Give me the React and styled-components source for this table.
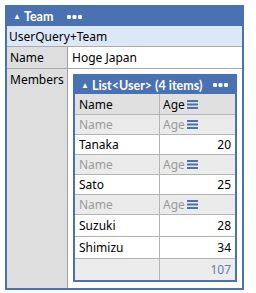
import styled, { createGlobalStyle } from "styled-components";

const blue = "#4a71b1";

const GlobalStyle = createGlobalStyle`
  body {
    margin: 5px;
    background: #ffffff;
    font-family: "Noto Sans", "Open Sans", sans-serif;
    font-size: 12px;
    color: #000;
  }
`;

const Panel = styled.div`
  width: 239px;
  box-sizing: border-box;
  border: 2px solid ${blue};
  background: #fff;
`;

const Caption = styled.div`
  height: ${(p) => p.$h || 19}px;
  background: ${blue};
  color: #fff;
  font-family: Lato, "Noto Sans", sans-serif;
  font-size: 12.5px;
  font-weight: bold;
  display: flex;
  align-items: center;
  padding-left: 6px;
  gap: 3px;
  white-space: nowrap;
`;

const Arrow = styled.span`
  font-size: 8px;
  margin-top: -1px;
`;

const DotsBox = styled.span`
  display: flex;
  margin-left: ${(p) => p.$gap || 12}px;
`;

const Dots = ({ gap }) => (
  <DotsBox $gap={gap}>
    <svg width="15" height="4" viewBox="0 0 15 4">
      <rect x="0" y="0" width="4" height="4" rx="1.3" fill="#fff" />
      <rect x="5.5" y="0" width="4" height="4" rx="1.3" fill="#fff" />
      <rect x="11" y="0" width="4" height="4" rx="1.3" fill="#fff" />
    </svg>
  </DotsBox>
);

const TypeRow = styled.div`
  height: 20px;
  background: #dce8f8;
  border-bottom: 1px solid #ababab;
  display: flex;
  align-items: center;
  padding-left: 2px;
`;

const Row = styled.div`
  display: grid;
  grid-template-columns: 61px 1fr;
  border-bottom: ${(p) => (p.$last ? "none" : "1px solid #ababab")};
`;

const Label = styled.div`
  background: #dedede;
  border-right: 1px solid #a0a0a0;
  padding: 2px 3px;
  min-height: 17px;
`;

const Value = styled.div`
  padding: ${(p) => (p.$nested ? "5px 5px 6px 5px" : "2px 4px")};
`;

const List = styled.div`
  border: 2px solid ${blue};
`;

const Grid = styled.div`
  display: grid;
  grid-template-columns: 85px 1fr;
`;

const Cell = styled.div`
  height: ${(p) => p.$h || 19}px;
  display: flex;
  align-items: center;
  justify-content: ${(p) => (p.$num ? "flex-end" : "flex-start")};
  padding: 0 ${(p) => (p.$tight ? 3 : 4)}px;
  background: ${(p) => p.$bg || "#fff"};
  color: ${(p) => p.$color || "#000"};
  border-bottom: ${(p) => (p.$last ? "none" : "1px solid #b4b4b4")};
  border-right: ${(p) => (p.$left ? "1px solid #b4b4b4" : "none")};
  gap: 2px;
`;

const Menu = () => (
  <svg width="11" height="9" viewBox="0 0 11 9">
    <rect x="0" y="0" width="11" height="2" fill={blue} />
    <rect x="0" y="3.5" width="11" height="2" fill={blue} />
    <rect x="0" y="7" width="11" height="2" fill={blue} />
  </svg>
);

const users = [
  { name: "Tanaka", age: 20, sub: true },
  { name: "Sato", age: 25, sub: true },
  { name: "Suzuki", age: 28, sub: true },
  { name: "Shimizu", age: 34 },
];

function SubHeader() {
  return (
    <>
      <Cell $left $bg="#ebebeb" $color="#9a9a9a">Name</Cell>
      <Cell $tight $bg="#ebebeb" $color="#9a9a9a">
        Age<Menu />
      </Cell>
    </>
  );
}

export default function App() {
  return (
    <>
      <GlobalStyle />
      <Panel>
        <Caption>
          <Arrow>▲</Arrow>Team<Dots gap={11} />
        </Caption>
        <TypeRow>UserQuery+Team</TypeRow>
        <Row>
          <Label>Name</Label>
          <Value>Hoge Japan</Value>
        </Row>
        <Row $last>
          <Label>Members</Label>
          <Value $nested>
            <List>
              <Caption $h={18}>
                <Arrow>▲</Arrow>List&lt;User&gt; (4 items)<Dots gap={8} />
              </Caption>
              <Grid>
                <Cell $left $bg="#e0e0e0" $h={20}>Name</Cell>
                <Cell $tight $bg="#e0e0e0" $h={20}>
                  Age<Menu />
                </Cell>
                {users.map((u, i) => (
                  <>
                    {u.sub && <SubHeader />}
                    <Cell $left $h={i >= 2 ? 21 : 19}>{u.name}</Cell>
                    <Cell $num $h={i >= 2 ? 21 : 19}>{u.age}</Cell>
                  </>
                ))}
                <Cell $left $last $bg="#ececec" $h={21} />
                <Cell $num $last $bg="#ececec" $color="#6a78a6" $h={21}>107</Cell>
              </Grid>
            </List>
          </Value>
        </Row>
      </Panel>
    </>
  );
}
